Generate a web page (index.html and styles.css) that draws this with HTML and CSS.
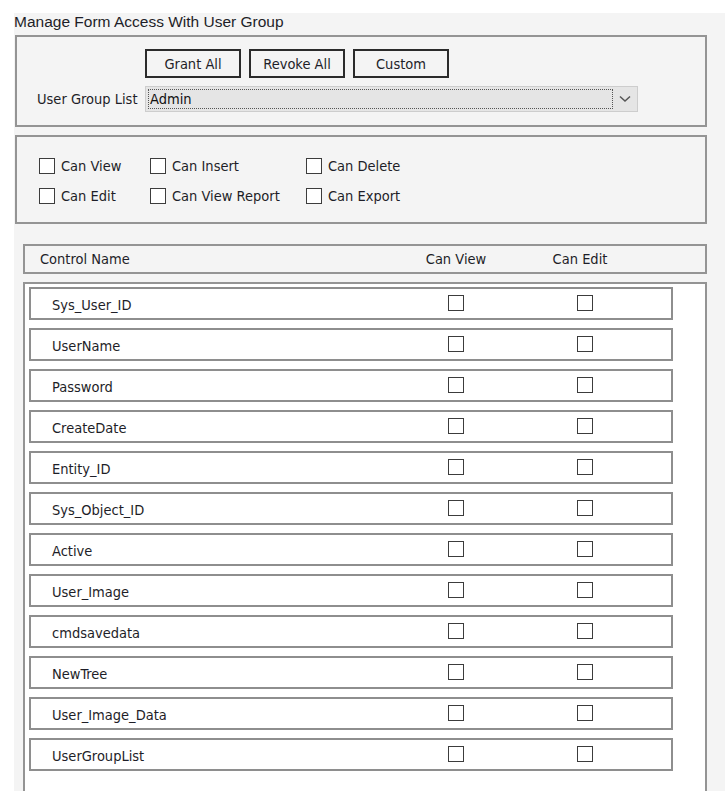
FILE: index.html
```html
<!DOCTYPE html>
<html>
<head>
<meta charset="utf-8">
<link rel="stylesheet" href="styles.css">
</head>
<body>
<div class="window">
  <div class="title">Manage Form Access With User Group</div>

  <div class="group group-top">
    <div class="btn-row">
      <div class="btn">Grant All</div>
      <div class="btn">Revoke All</div>
      <div class="btn">Custom</div>
    </div>
    <div class="combo-row">
      <div class="combo-label">User Group List</div>
      <div class="combo">
        <div class="combo-text">Admin</div>
        <div class="combo-arrow">
          <svg width="12" height="8" viewBox="0 0 12 8"><path d="M1 1.5 L6 6 L11 1.5" fill="none" stroke="#555" stroke-width="1.5"/></svg>
        </div>
      </div>
    </div>
  </div>

  <div class="group group-perm">
    <div class="perm-grid">
      <label class="perm"><span class="chk"></span>Can View</label>
      <label class="perm"><span class="chk"></span>Can Insert</label>
      <label class="perm"><span class="chk"></span>Can Delete</label>
      <label class="perm"><span class="chk"></span>Can Edit</label>
      <label class="perm"><span class="chk"></span>Can View Report</label>
      <label class="perm"><span class="chk"></span>Can Export</label>
    </div>
  </div>

  <div class="list-header">
    <div class="h-name">Control Name</div>
    <div class="h-cell h-view">Can View</div>
    <div class="h-cell h-edit">Can Edit</div>
  </div>

  <div class="list">
    <div class="row"><div class="r-name">Sys_User_ID</div><div class="r-cell"><span class="chk"></span></div><div class="r-cell r-edit"><span class="chk"></span></div></div>
    <div class="row"><div class="r-name">UserName</div><div class="r-cell"><span class="chk"></span></div><div class="r-cell r-edit"><span class="chk"></span></div></div>
    <div class="row"><div class="r-name">Password</div><div class="r-cell"><span class="chk"></span></div><div class="r-cell r-edit"><span class="chk"></span></div></div>
    <div class="row"><div class="r-name">CreateDate</div><div class="r-cell"><span class="chk"></span></div><div class="r-cell r-edit"><span class="chk"></span></div></div>
    <div class="row"><div class="r-name">Entity_ID</div><div class="r-cell"><span class="chk"></span></div><div class="r-cell r-edit"><span class="chk"></span></div></div>
    <div class="row"><div class="r-name">Sys_Object_ID</div><div class="r-cell"><span class="chk"></span></div><div class="r-cell r-edit"><span class="chk"></span></div></div>
    <div class="row"><div class="r-name">Active</div><div class="r-cell"><span class="chk"></span></div><div class="r-cell r-edit"><span class="chk"></span></div></div>
    <div class="row"><div class="r-name">User_Image</div><div class="r-cell"><span class="chk"></span></div><div class="r-cell r-edit"><span class="chk"></span></div></div>
    <div class="row"><div class="r-name">cmdsavedata</div><div class="r-cell"><span class="chk"></span></div><div class="r-cell r-edit"><span class="chk"></span></div></div>
    <div class="row"><div class="r-name">NewTree</div><div class="r-cell"><span class="chk"></span></div><div class="r-cell r-edit"><span class="chk"></span></div></div>
    <div class="row"><div class="r-name">User_Image_Data</div><div class="r-cell"><span class="chk"></span></div><div class="r-cell r-edit"><span class="chk"></span></div></div>
    <div class="row"><div class="r-name">UserGroupList</div><div class="r-cell"><span class="chk"></span></div><div class="r-cell r-edit"><span class="chk"></span></div></div>
  </div>
</div>
</body>
</html>
```

FILE: styles.css
```css
* { box-sizing: border-box; }

html, body {
  margin: 0;
  padding: 0;
  background: #ffffff;
  height: 100%;
  overflow: hidden;
}

body {
  font-family: "DejaVu Sans Condensed", "DejaVu Sans", sans-serif;
  font-size: 14.5px;
  color: #1e1e28;
}

.window {
  margin: 13px 0 0 14px;
  background: #f4f4f4;
  height: calc(100vh - 13px);
  overflow: hidden;
}

.title {
  font-family: "Liberation Sans", Arial, sans-serif;
  font-size: 15.5px;
  line-height: 17px;
  height: 22px;
  padding-top: 0;
  color: #1e1e28;
}

.group {
  margin-left: 1px;
  width: 692px;
  border: 2px solid #949494;
}

.group-top {
  height: 92px;
  padding: 12px 0 0 20px;
}

.btn-row {
  display: flex;
  gap: 8px;
  margin-left: 108px;
}

.btn {
  width: 96px;
  height: 29px;
  border: 2px solid #2b2b2b;
  background: #f4f4f4;
  display: flex;
  align-items: center;
  justify-content: center;
}

.combo-row {
  display: flex;
  align-items: center;
  margin-top: 8px;
}

.combo-label {
  width: 108px;
  white-space: nowrap;
}

.combo {
  width: 493px;
  height: 26px;
  background: #e5e5e5;
  border: 1px solid #cdcdcd;
  display: flex;
  align-items: stretch;
  padding: 2px 0 2px 2px;
}

.combo-text {
  flex: 1;
  border: 1px dotted #555;
  display: flex;
  align-items: center;
  padding-left: 1px;
  color: #111;
}

.combo-arrow {
  width: 24px;
  display: flex;
  align-items: center;
  justify-content: center;
}

.group-perm {
  margin-top: 8px;
  height: 89px;
  padding: 21px 0 0 22px;
}

.perm-grid {
  display: grid;
  grid-template-columns: 111px 156px 160px;
  row-gap: 14px;
}

.perm {
  display: flex;
  align-items: center;
  height: 16px;
  gap: 6px;
  white-space: nowrap;
}

.chk {
  display: inline-block;
  width: 16px;
  height: 16px;
  border: 1.5px solid #3c3c3c;
  background: #ffffff;
  flex: none;
}

.list-header {
  margin: 20px 0 0 9px;
  width: 684px;
  height: 30px;
  border: 2px solid #949494;
  display: flex;
  align-items: center;
}

.h-name {
  width: 371px;
  padding-left: 15px;
}

.h-cell {
  width: 120px;
  text-align: center;
}

.h-edit {
  margin-left: 4px;
}

.list {
  margin: 8px 0 0 9px;
  width: 684px;
  height: 600px;
  background: #ffffff;
  border: 2px solid #949494;
  border-bottom: none;
  padding: 3px 0 0 4px;
  display: flex;
  flex-direction: column;
  gap: 8px;
}

.row {
  width: 644px;
  height: 33px;
  border: 2px solid #8e8e8e;
  background: #ffffff;
  display: flex;
  align-items: center;
}

.r-name {
  width: 365px;
  padding-left: 21px;
  padding-top: 3px;
}

.r-cell {
  width: 120px;
  display: flex;
  justify-content: center;
  margin-top: -2px;
}

.r-edit {
  margin-left: 9px;
}
```
